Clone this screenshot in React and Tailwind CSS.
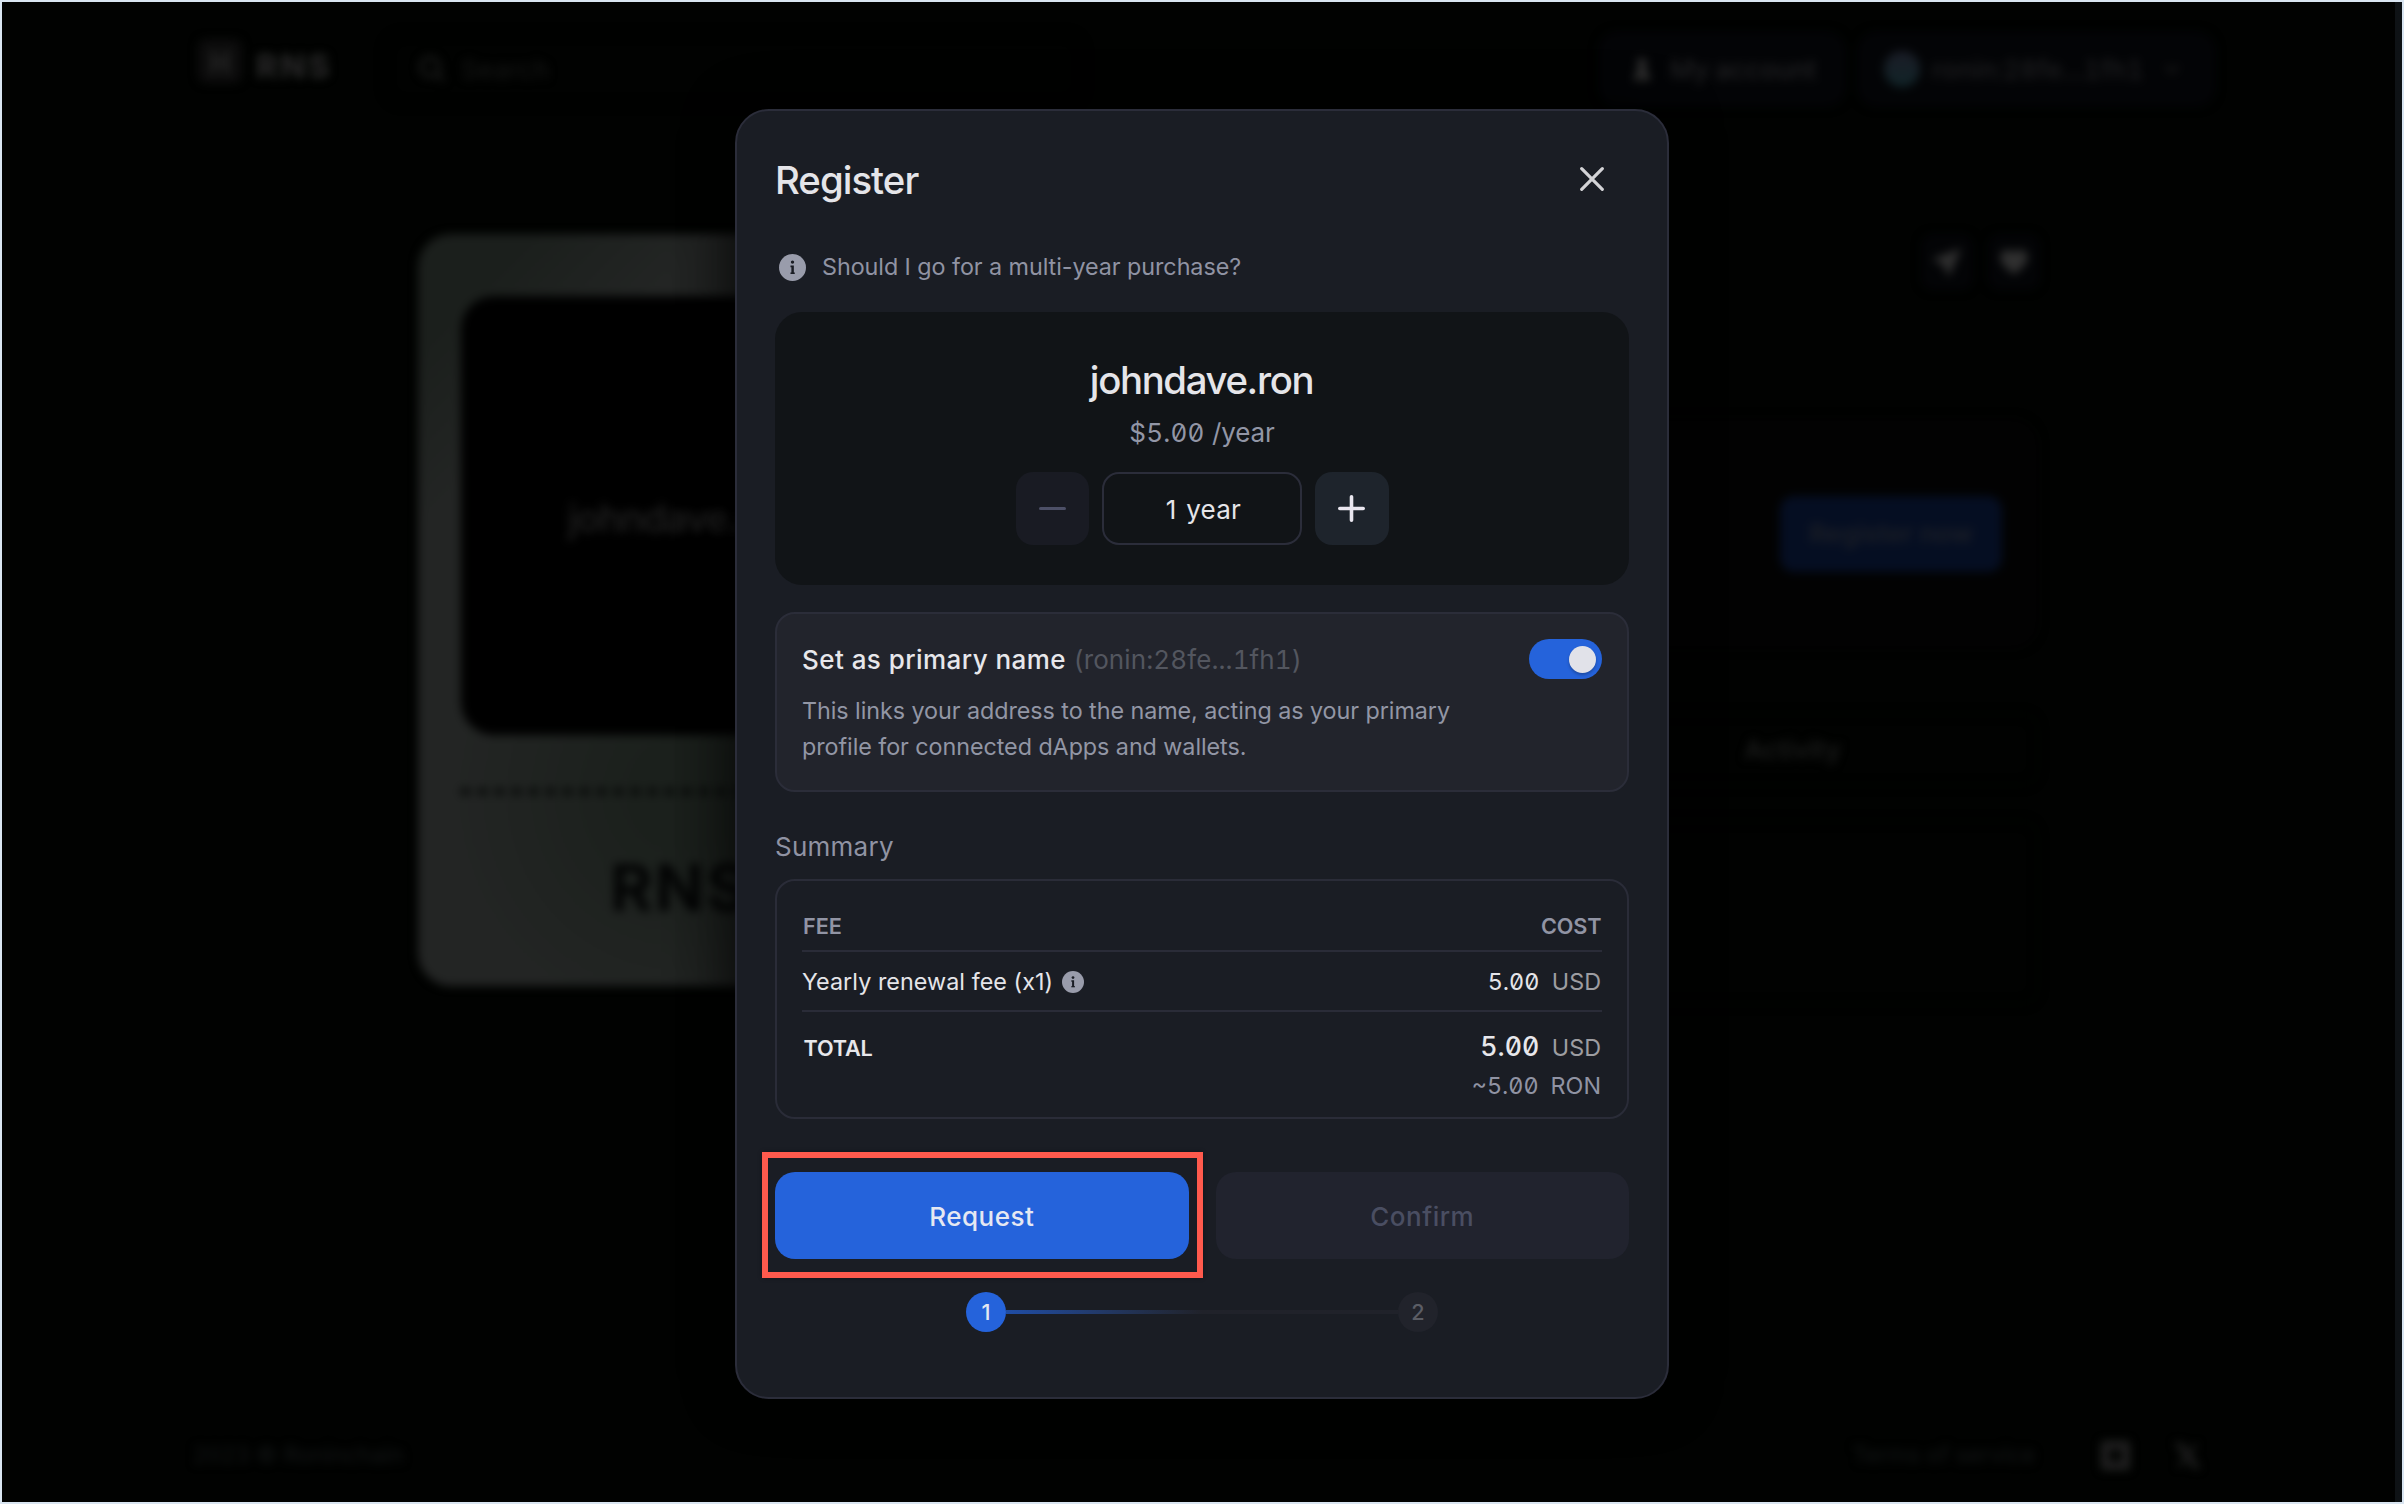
import React from "react";

function InfoIcon({ className, hole }) {
  return (
    <svg viewBox="0 0 24 24" className={className}>
      <circle cx="12" cy="12" r="12" fill="#999cab" />
      <circle cx="12" cy="7.2" r="1.5" fill={hole} />
      <path d="M10.200 10.200h3v7h-2.200v-5.500h-.8z" fill={hole} />
      <path d="M10.200 16.400h3.800v1.400h-3.800z" fill={hole} />
    </svg>
  );
}

function Header() {
  return (
    <header className="flex h-[134px] shrink-0 items-center pr-[179px] pl-[196px]">
      <div className="mb-4 flex h-[44px] w-[44px] items-center justify-center rounded-lg bg-[#0c0c0c]">
        <svg viewBox="0 0 24 24" className="h-8 w-8" fill="none" stroke="#222222" strokeWidth="4">
          <path d="M7 4v18M17 4v18M7 13h10" />
        </svg>
      </div>
      <span className="mb-1.5 ml-3.5 text-[33px] leading-none font-extrabold tracking-[2.4px] text-[#272727]">RNS</span>
      <div className="ml-[52px] flex h-[72px] w-[700px] items-center rounded-[20px] border-2 border-[#020303] pl-[30px] text-[#171717]">
        <svg viewBox="0 0 24 24" className="h-8 w-8" fill="none" stroke="#1c1c1c" strokeWidth="2.6">
          <circle cx="10.5" cy="10.5" r="7" />
          <path d="M16 16l5 5" />
        </svg>
        <span className="ml-[13px] text-[26px] tracking-[0.3px]">Search</span>
      </div>
      <div className="ml-auto flex h-[76px] w-[248px] items-center rounded-[20px] bg-[#030406] pl-[32px] font-medium text-[#222224]">
        <svg viewBox="0 0 24 24" className="h-8 w-6" fill="#303030">
          <circle cx="12" cy="6" r="5" />
          <path d="M9 9h6l1 6 4 3v5H4v-5l4-3z" />
        </svg>
        <span className="ml-[16px] text-[26px]">My account</span>
      </div>
      <div className="ml-[11px] flex h-[76px] w-[359px] items-center rounded-[20px] bg-[#030406] pl-[27px] font-medium text-[#1f1f21]">
        <div className="h-[36px] w-[36px] rounded-full bg-linear-to-b from-[#1a1c26] to-[#102428]" />
        <span className="ml-[12px] text-[26px] tracking-[0.2px] tabular-nums">ronin:28fe...1fh1</span>
        <svg viewBox="0 0 24 24" className="ml-4 h-6 w-6" fill="none" stroke="#1a1a1b" strokeWidth="3">
          <path d="M6 9l6 6 6-6" />
        </svg>
      </div>
    </header>
  );
}

function NameCard() {
  return (
    <section className="h-[752px] w-[560px] rounded-[33px] bg-[linear-gradient(to_right,transparent_250px,rgba(0,0,0,0.3)_330px),radial-gradient(circle_at_270px_560px,#1b201c_50px,transparent_240px),linear-gradient(135deg,#1b1f1c_80px,#232524_210px)] px-[43px] pt-[62px]">
      <div className="flex h-[439px] items-center rounded-[33px] bg-black pl-[107px]">
        <span className="mt-[6px] text-[38px] font-medium tracking-[-0.8px] text-[#222222]">johndave.ron</span>
      </div>
      <div className="mt-[53px] h-[7px] bg-[repeating-linear-gradient(to_right,#060807_0_9px,transparent_9px_17px)]" />
      <div className="mt-[60px] pl-[149px] text-[65px] leading-[66px] font-bold tracking-[2px] text-[#030404]">RNS</div>
    </section>
  );
}

function Details() {
  return (
    <section className="w-[1000px]">
      <div className="flex h-[56px] justify-end gap-[15px]">
        <div className="flex w-[52px] items-center justify-center rounded-xl bg-[#030406]">
          <svg viewBox="0 0 24 24" className="h-[30px] w-[30px]" fill="#303030">
            <path d="M23.500 1L0 9.500l9 5L13.500 24z" />
          </svg>
        </div>
        <div className="-mr-px flex w-[52px] items-center justify-center rounded-xl bg-[#030406]">
          <svg viewBox="0 0 24 24" className="h-[30px] w-[30px]" fill="#303030">
            <path d="M12 22C4 16 1 12 1 8c0-6 8-8 11-3 3-5 11-3 11 3 0 4-3 8-11 14z" />
          </svg>
        </div>
      </div>
      <div className="mt-[128px] flex h-[231px] items-center justify-end rounded-[27px] bg-[#020202] pr-[37px]">
        <div className="flex h-[76px] w-[222px] items-center justify-center rounded-[14px] bg-[#050e22] text-[26px] font-semibold text-[#1c1f26]">
          Register now
        </div>
      </div>
      <div className="mt-[64px] flex h-[73px] items-center justify-end rounded-[18px] border-2 border-[#020403] pr-[196px] text-[26px] font-semibold text-[#1b1b1b]">
        Activity
      </div>
      <div className="mt-[34px] h-[185px] rounded-[18px] border-2 border-[#020403]" />
    </section>
  );
}

function Footer() {
  return (
    <footer className="mt-auto flex h-[94px] shrink-0 items-center pr-[194px] pl-[191px] text-[23px] text-[#141617]">
      <span>2023 © Roninchain</span>
      <span className="ml-auto">Terms of service</span>
      <svg viewBox="0 0 24 24" className="ml-[65px] h-[31px] w-[31px]" fill="none" stroke="#232323" strokeWidth="6">
        <rect x="4" y="4" width="16" height="16" />
      </svg>
      <svg viewBox="0 0 24 24" className="ml-[43px] h-[27px] w-[27px]" fill="none" stroke="#1f1f1f" strokeWidth="3">
        <path d="M3 2l15 20h3L6 2zM20 2L4 22" />
      </svg>
    </footer>
  );
}

function YearPicker() {
  return (
    <div className="mt-[22px] flex h-[273px] flex-col items-center rounded-[27px] bg-[#111417] pt-[40px]">
      <div className="h-[56px] pr-px text-[38.33px] leading-[56px] font-medium tracking-[-1.35px] text-[#e5e5e9]">johndave.ron</div>
      <div className="mt-[5px] h-[40px] text-[26px] leading-[40px] text-[#9296a6]">
        <span className="tracking-[0.2px] slashed-zero tabular-nums">$5.00</span> <span className="tracking-[-0.1px]">/year</span>
      </div>
      <div className="mt-[19px] flex h-[73px] gap-[13px]">
        <button className="flex w-[73.5px] items-center justify-center rounded-[17px] bg-[#191b23]">
          <span className="h-[3.5px] w-[27px] rounded-full bg-[#4d5067]" />
        </button>
        <div className="flex w-[200px] items-center justify-center rounded-[17px] border-2 border-[#2b2d3a] pt-[2px] pl-[3px] text-[26px] tracking-[0.25px] text-[#e5e5e9] [word-spacing:2px]">
          1 year
        </div>
        <button className="flex w-[73.5px] items-center justify-center rounded-[17px] bg-[#1e242c]">
          <svg viewBox="0 0 27 27" className="h-[27px] w-[27px]" fill="none" stroke="#e9e6ef" strokeWidth="3.6" strokeLinecap="round">
            <path d="M13.500 1.800v23.400M1.800 13.500h23.400" />
          </svg>
        </button>
      </div>
    </div>
  );
}

function PrimaryName() {
  return (
    <div className="mt-[27px] h-[180px] rounded-[20px] border-2 border-[#2b2d39] bg-[#22242c] px-[25px] pt-[25px]">
      <div className="flex h-[40px] items-center justify-between text-[26px]">
        <div className="whitespace-pre">
          <span className="font-medium tracking-[0.45px] text-[#e7e7eb]">Set as primary name </span>
          <span className="tracking-[0.1px] text-[#53565f] tabular-nums">(ronin:28fe...1fh1)</span>
        </div>
        <div className="flex h-[40px] w-[73.5px] items-center justify-end rounded-full bg-[#2563db] pr-[6.5px]">
          <div className="h-[27px] w-[27px] rounded-full bg-[#e1e2e9] shadow-[0_2px_3px_rgba(0,0,0,0.25)]" />
        </div>
      </div>
      <p className="mt-[13.500px] text-[23.33px] leading-[36.5px] tracking-[-0.06px] text-[#9296a5]">
        This links your address to the name, acting as your primary
        <br />
        profile for connected dApps and wallets.
      </p>
    </div>
  );
}

function Summary() {
  return (
    <>
      <h2 className="mt-[35px] h-[40px] text-[26px] leading-[40px] tracking-[0.25px] text-[#9093a3]">Summary</h2>
      <div className="mt-[12px] h-[240px] rounded-[20px] border-2 border-[#2a2c38] px-[25px] text-[23.33px]">
        <div className="flex h-[71px] items-center justify-between border-b-2 border-[#2a2c38] pt-[21px] text-[21.67px] font-semibold tracking-[-0.1px] text-[#9194a4]">
          <span className="pl-px">FEE</span>
          <span className="pr-[0.5px]">COST</span>
        </div>
        <div className="flex h-[60px] items-center border-b-2 border-[#2a2c38] pt-[2px] pr-[1px] text-[#e5e5e9]">
          <span className="tracking-[0.05px]">Yearly renewal fee (x1)</span>
          <InfoIcon className="ml-[9px] h-[22px] w-[22px]" hole="#1a1d24" />
          <span className="ml-auto slashed-zero tabular-nums">5.00</span>
          <span className="ml-[12.500px] text-[#9d9da1]">USD</span>
        </div>
        <div className="flex items-baseline pt-[15px] pr-[1px] leading-[38px] text-[#e7e7eb]">
          <span className="pl-[1.500px] text-[21.67px] font-semibold tracking-[-0.2px]">TOTAL</span>
          <span className="ml-auto text-[26.67px] font-medium slashed-zero tabular-nums">5.00</span>
          <span className="ml-[12.500px] text-[#9d9da1]">USD</span>
        </div>
        <div className="flex h-[38px] items-center justify-end pr-[1px] text-[#9093a3]">
          <span className="slashed-zero tabular-nums">~5.00</span>
          <span className="ml-[12px]">RON</span>
        </div>
      </div>
    </>
  );
}

function Actions() {
  return (
    <>
      <div className="mt-[53px] flex h-[87px] gap-[27px] text-[26px] font-medium tracking-[0.5px]">
        <div className="relative flex flex-1">
          <button className="flex flex-1 items-center justify-center rounded-[20px] bg-[#2563db] pt-px text-[#e5e8f2]">Request</button>
          <div className="absolute -top-[20px] -left-[13px] h-[126px] w-[441px] border-6 border-[#ff5a4d] shadow-[0_0_4px_rgba(0,0,0,0.35)]" />
        </div>
        <button className="flex flex-1 items-center justify-center rounded-[20px] bg-[#21232e] pt-px text-[#4a4e62]">Confirm</button>
      </div>
      <div className="mx-auto mt-[33px] flex h-[40px] w-[472px] items-center text-[21.67px] font-medium">
        <span className="flex h-[40px] w-[40px] items-center justify-center rounded-full bg-[#2563db] text-[#e5e8f2]">1</span>
        <span className="h-[3.5px] flex-1 bg-linear-to-r from-[#1f4da6] to-[#20222a] to-50%" />
        <span className="flex h-[40px] w-[40px] items-center justify-center rounded-full bg-[#21232b] text-[#5b5d65]">2</span>
      </div>
    </>
  );
}

export default function App() {
  return (
    <div className="relative flex h-[1504px] w-[2404px] overflow-hidden border-2 border-[#d9e5f1] bg-[#010201] font-['Inter',sans-serif]">
      <div className="flex flex-1 flex-col blur-[5px]" aria-hidden="true">
        <Header />
        <main className="mt-[98px] flex justify-between pr-[356px] pl-[416px]">
          <NameCard />
          <Details />
        </main>
        <Footer />
      </div>
      <div className="w-[7px] bg-[#0e1215]" />

      <div className="absolute inset-0 flex items-start justify-center pt-[107px]">
        <div className="h-[1290px] w-[934px] rounded-[34px] border-2 border-[#2b2d3a] bg-[#1a1d24] px-[38px] pt-[29px] shadow-[0_0_50px_rgba(0,0,0,0.6)]">
          <div className="flex h-[80px] items-center justify-between">
            <h1 className="mt-px text-[38.33px] font-medium tracking-[-0.95px] text-[#e5e5e9]">Register</h1>
            <svg viewBox="0 0 24 24" className="mr-[25px] mb-[2px] h-[24px] w-[24px]" fill="none" stroke="#d3d3d6" strokeWidth="3.200" strokeLinecap="round">
              <path d="M1.700 1.700l20.600 20.600M22.300 1.700L1.700 22.300" />
            </svg>
          </div>
          <div className="mt-6 flex h-[46px] items-center pl-[3.500px]">
            <InfoIcon className="h-[27px] w-[27px]" hole="#1a1d24" />
            <span className="ml-[16.500px] text-[23.33px] tracking-[-0.06px] text-[#9093a3]">Should I go for a multi-year purchase?</span>
          </div>
          <YearPicker />
          <PrimaryName />
          <Summary />
          <Actions />
        </div>
      </div>
    </div>
  );
}
